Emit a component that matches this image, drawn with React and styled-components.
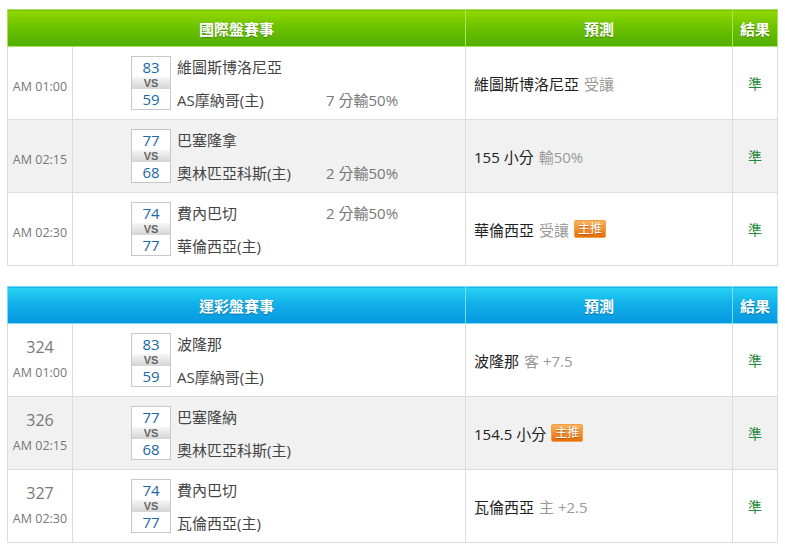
import styled, { createGlobalStyle, css } from "styled-components"

const GlobalStyle = createGlobalStyle`
    body {
        margin: 0;
        background: #fff;
        font-family: "Open Sans", "Noto Sans CJK TC", sans-serif;
    }
`

const tones = {
    green: css`
        background: linear-gradient(to bottom, #95d800 0%, #6cc300 45%, #52ae00 100%);
        border-color: #a9e35c;
    `,
    blue: css`
        background: linear-gradient(to bottom, #27d3f3 0%, #12b0ea 45%, #0897e1 100%);
        border-color: #7cdcf6;
    `,
}

const Page = styled.div`
    display: flex;
    flex-direction: column;
    gap: 20px;
    padding: 9px 0 0 7px;
`

const Board = styled.table`
    width: 771px;
    border-collapse: collapse;
    table-layout: fixed;
`

const HeadCell = styled.th`
    height: 36px;
    padding: 0;
    border: 1px solid;
    ${(p) => tones[p.$tone]}
    color: #fff;
    font-size: 15px;
    font-weight: bold;
    text-shadow: 0 1px 1px rgba(0, 0, 0, 0.3);
    text-align: center;
`

const Row = styled.tr`
    height: 73px;
    background: ${(p) => (p.$alt ? "#f1f1f1" : "#fff")};
`

const Cell = styled.td`
    border: 1px solid #dcdcdc;
    padding: 0;
    vertical-align: middle;
`

const TimeCell = styled(Cell)`
    text-align: center;
    color: #777;
    padding-top: ${(p) => (p.$num ? "0" : "8px")};
`

const Num = styled.div`
    font-size: 16px;
    line-height: 26px;
`

const Time = styled.div`
    font-size: 12.5px;
    line-height: 26px;
`

const Match = styled.div`
    display: grid;
    grid-template-columns: 40px 143px auto;
    grid-template-rows: 21px 12px 21px;
    column-gap: 6px;
    padding-left: 58px;
    font-size: 15px;
    color: #444;
`

const Score = styled.div`
    grid-column: 1;
    grid-row: ${(p) => p.$row};
    border: 1px solid #c8c8c8;
    ${(p) => (p.$row === 1 ? "border-bottom: none;" : "border-top: none;")}
    background: #fff;
    color: #1c67a8;
    font-size: 15px;
    text-align: center;
    line-height: 20px;
`

const Vs = styled.div`
    grid-column: 1;
    grid-row: 2;
    border-left: 1px solid #c8c8c8;
    border-right: 1px solid #c8c8c8;
    background: linear-gradient(to bottom, #f6f6f6, #d4d4d4);
    color: #666;
    font-family: "Liberation Sans", sans-serif;
    font-size: 11px;
    font-weight: bold;
    line-height: 12px;
    text-align: center;
`

const Team = styled.div`
    grid-column: 2;
    grid-row: ${(p) => p.$row};
    line-height: 22px;
    white-space: nowrap;
`

const Handicap = styled.div`
    grid-column: 3;
    grid-row: ${(p) => p.$row};
    line-height: 22px;
    color: #777;
    white-space: nowrap;
`

const PredCell = styled(Cell)`
    padding-left: 8px;
    font-size: 15px;
    color: #222;
`

const Pred = styled.span`
    display: inline-flex;
    align-items: center;
    gap: 5px;
`

const Muted = styled.span`
    color: #999;
`

const Badge = styled.span`
    display: inline-block;
    padding: 0 3px;
    height: 16px;
    line-height: 16px;
    border: 1px solid #f2a048;
    border-radius: 2px;
    background: linear-gradient(to bottom, #fbb35c, #e86e0c);
    color: #fff;
    font-size: 12px;
    text-shadow: 0 1px 1px rgba(120, 50, 0, 0.5);
`

const ResultCell = styled(Cell)`
    text-align: center;
    color: #1f8a3c;
    font-size: 14px;
`

const boards = [
    {
        title: "國際盤賽事",
        tone: "green",
        games: [
            { time: "AM 01:00", home: 83, away: 59, t1: "維圖斯博洛尼亞", t2: "AS摩納哥(主)", hc: "7 分輸50%", hcRow: 3, pick: "維圖斯博洛尼亞", note: "受讓" },
            { time: "AM 02:15", home: 77, away: 68, t1: "巴塞隆拿", t2: "奧林匹亞科斯(主)", hc: "2 分輸50%", hcRow: 3, pick: "155 小分", note: "輸50%" },
            { time: "AM 02:30", home: 74, away: 77, t1: "費內巴切", t2: "華倫西亞(主)", hc: "2 分輸50%", hcRow: 1, pick: "華倫西亞", note: "受讓", hot: true },
        ],
    },
    {
        title: "運彩盤賽事",
        tone: "blue",
        games: [
            { num: 324, time: "AM 01:00", home: 83, away: 59, t1: "波隆那", t2: "AS摩納哥(主)", pick: "波隆那", note: "客 +7.5" },
            { num: 326, time: "AM 02:15", home: 77, away: 68, t1: "巴塞隆納", t2: "奧林匹亞科斯(主)", pick: "154.5 小分", hot: true },
            { num: 327, time: "AM 02:30", home: 74, away: 77, t1: "費內巴切", t2: "瓦倫西亞(主)", pick: "瓦倫西亞", note: "主 +2.5" },
        ],
    },
]

const App = () => {
    return (
        <>
            <GlobalStyle />
            <Page>
                {boards.map((board) => (
                    <Board key={board.title}>
                        <colgroup>
                            <col style={{ width: 65 }} />
                            <col style={{ width: 393 }} />
                            <col style={{ width: 267 }} />
                            <col style={{ width: 45 }} />
                        </colgroup>
                        <thead>
                            <tr>
                                <HeadCell $tone={board.tone} colSpan={2}>{board.title}</HeadCell>
                                <HeadCell $tone={board.tone}>預測</HeadCell>
                                <HeadCell $tone={board.tone}>結果</HeadCell>
                            </tr>
                        </thead>
                        <tbody>
                            {board.games.map((g, i) => (
                                <Row key={i} $alt={i === 1}>
                                    <TimeCell $num={!!g.num}>
                                        {g.num && <Num>{g.num}</Num>}
                                        <Time>{g.time}</Time>
                                    </TimeCell>
                                    <Cell>
                                        <Match>
                                            <Score $row={1}>{g.home}</Score>
                                            <Vs>VS</Vs>
                                            <Score $row={3}>{g.away}</Score>
                                            <Team $row={1}>{g.t1}</Team>
                                            <Team $row={3}>{g.t2}</Team>
                                            {g.hc && <Handicap $row={g.hcRow}>{g.hc}</Handicap>}
                                        </Match>
                                    </Cell>
                                    <PredCell>
                                        <Pred>
                                            {g.pick}
                                            {g.note && <Muted>{g.note}</Muted>}
                                            {g.hot && <Badge>主推</Badge>}
                                        </Pred>
                                    </PredCell>
                                    <ResultCell>準</ResultCell>
                                </Row>
                            ))}
                        </tbody>
                    </Board>
                ))}
            </Page>
        </>
    )
}

export default App
